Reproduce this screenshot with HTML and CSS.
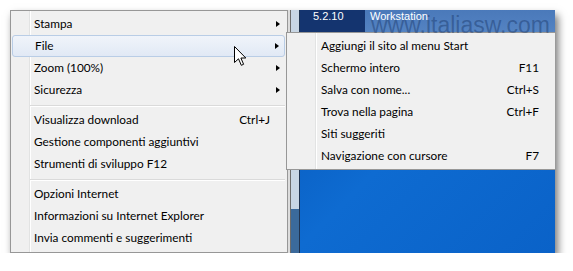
FILE: index.html
```html
<!DOCTYPE html>
<html lang="it">
<head>
  <meta charset="UTF-8" />
  <title>Menu Strumenti - Internet Explorer</title>
  <link rel="stylesheet" href="styles.css">
</head>
<body>
  <div class="shot">
    <ul class="menu main">
      <li class="item"><span class="label">Stampa</span><span class="key"></span><span class="more"><i class="arrow"></i></span></li>
      <li class="item hot"><span class="label">File</span><span class="key"></span><span class="more"><i class="arrow"></i></span></li>
      <li class="item"><span class="label">Zoom (100%)</span><span class="key"></span><span class="more"><i class="arrow"></i></span></li>
      <li class="item"><span class="label">Sicurezza</span><span class="key"></span><span class="more"><i class="arrow"></i></span></li>
      <li class="sep"></li>
      <li class="item"><span class="label">Visualizza download</span><span class="key">Ctrl+J</span><span class="more"></span></li>
      <li class="item"><span class="label">Gestione componenti aggiuntivi</span><span class="key"></span><span class="more"></span></li>
      <li class="item"><span class="label">Strumenti di sviluppo F12</span><span class="key"></span><span class="more"></span></li>
      <li class="sep"></li>
      <li class="item"><span class="label">Opzioni Internet</span><span class="key"></span><span class="more"></span></li>
      <li class="item"><span class="label">Informazioni su Internet Explorer</span><span class="key"></span><span class="more"></span></li>
      <li class="item"><span class="label">Invia commenti e suggerimenti</span><span class="key"></span><span class="more"></span></li>
    </ul>

    <div class="backdrop">
      <div class="rail"><div class="rail-thumb"></div></div>
      <div class="screen">
        <div class="titlebar">
          <span class="ver">5.2.10</span>
          <span class="tab">Workstation</span>
        </div>
        <div class="desktop"></div>
      </div>
    </div>

    <ul class="menu sub">
      <li class="item"><span class="label">Aggiungi il sito al menu Start</span><span class="key"></span></li>
      <li class="item"><span class="label">Schermo intero</span><span class="key">F11</span></li>
      <li class="item"><span class="label">Salva con nome...</span><span class="key">Ctrl+S</span></li>
      <li class="item"><span class="label">Trova nella pagina</span><span class="key">Ctrl+F</span></li>
      <li class="item"><span class="label">Siti suggeriti</span><span class="key"></span></li>
      <li class="item"><span class="label">Navigazione con cursore</span><span class="key">F7</span></li>
    </ul>

    <div class="watermark">www.italiasw.com</div>

    <svg class="cursor" width="13" height="21" viewBox="0 0 13 21">
      <path d="M0.5 0.5 V16.5 L4.5 12.8 L7.3 19.3 L9.6 18.3 L6.9 12 H11.8 Z" fill="#fff" stroke="#000" stroke-width="1" stroke-linejoin="round"/>
    </svg>
  </div>
</body>
</html>
```

FILE: styles.css
```css
:root {
  --menu-bg: #f0f0f0;
  --menu-border: #979797;
  --gutter: #e2e3e3;
  --text: #000;
}

body {
  margin: 0;
  background: #fff;
  color: var(--text);
  font-family: Lato, "Liberation Sans", sans-serif;
  font-size: 11.8px;
}

.shot {
  position: relative;
  display: flex;
  width: 545px;
  height: 243px;
  margin: 10px 0 0 10px;
  background: #0a60c4;
  box-shadow: 3px 5px 8px rgba(0, 0, 0, 0.55);
}

/* menus */

.menu {
  list-style: none;
  margin: 0;
  padding: 2px 0;
  background-color: var(--menu-bg);
  border: 1px solid var(--menu-border);
}

.main {
  flex: none;
  width: 276px;
  background-image: linear-gradient(to right, transparent 18px, var(--gutter) 18px 19px, #fff 19px 20px, transparent 20px);
}

.sub {
  position: absolute;
  left: 276px;
  top: 22px;
  width: 268px;
  border-right: none;
  background-image: linear-gradient(to right, transparent 28px, var(--gutter) 28px 29px, #fff 29px 30px, transparent 30px);
  z-index: 2;
}

.item {
  display: flex;
  align-items: center;
  height: 22px;
  margin: 0 2px 0 1px;
  padding-bottom: 1px;
  box-sizing: border-box;
  white-space: nowrap;
}

.main .item {
  padding-left: 22px;
}

.sub .item {
  padding-left: 33px;
  padding-right: 14px;
}

.label {
  flex: 1;
}

.more {
  width: 15px;
  flex: none;
}

.arrow {
  display: block;
  width: 0;
  height: 0;
  margin-left: 6px;
  border-left: 4px solid #000;
  border-top: 3px solid transparent;
  border-bottom: 3px solid transparent;
}

.item.hot {
  border: 1px solid #b9cde6;
  border-radius: 3px;
  background: linear-gradient(#f0f4fa, #e1e9f5);
}

.sep {
  height: 8px;
  margin: 0 2px 0 19px;
  background: linear-gradient(transparent 4px, #dadada 4px 5px, #fff 5px 6px, transparent 6px);
}

/* what lies behind the menus */

.backdrop {
  flex: 1;
  display: flex;
}

.rail {
  position: relative;
  width: 12px;
  flex: none;
  background: linear-gradient(to right, #dcdcdc 0 2px, #6c6c6c 2px 3px, #c8d6e4 3px 11px, #1f3350 11px 12px);
}

.rail-thumb {
  position: absolute;
  left: 3px;
  right: 1px;
  top: 199px;
  bottom: 0;
  background: #3b6a9b;
}

.screen {
  flex: 1;
  display: flex;
  flex-direction: column;
}

.titlebar {
  display: flex;
  height: 22px;
  flex: none;
  color: #fff;
  font-family: "Liberation Sans", sans-serif;
  font-size: 11px;
  line-height: 12px;
}

.ver {
  width: 52px;
  padding-left: 13px;
  background: #14346f;
}

.tab {
  flex: 1;
  padding-left: 5px;
  background: linear-gradient(#4a79ba, #5483c2);
}

.desktop {
  flex: 1;
  background: linear-gradient(135deg, #0758ba 0%, #0e6bd1 45%, #0a62c8 100%);
}

.watermark {
  position: absolute;
  left: 361px;
  top: 4px;
  font-family: "Liberation Sans", sans-serif;
  font-size: 23px;
  line-height: 23px;
  color: rgba(25, 55, 105, 0.45);
  z-index: 3;
}

.cursor {
  position: absolute;
  left: 224px;
  top: 36px;
  z-index: 4;
}
```
